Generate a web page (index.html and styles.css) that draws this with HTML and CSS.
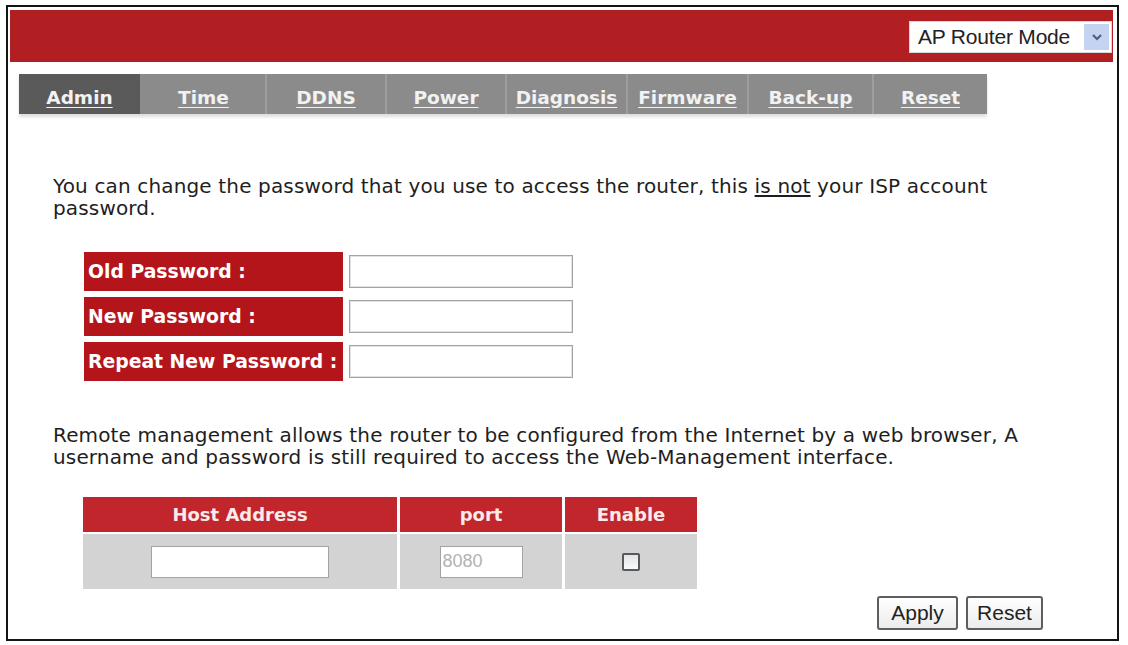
FILE: index.html
```html
<!DOCTYPE html>
<html lang="en">
<head>
  <meta charset="UTF-8">
  <meta name="viewport" content="width=device-width, initial-scale=1.0">
  <title>Admin</title>
  <link rel="stylesheet" href="styles.css">
</head>
<body>

<div class="frame">
  <div class="topbar">
    <div class="mode-select">
      <span class="mode-text">AP Router Mode</span>
      <span class="mode-arrow">
        <svg width="12" height="10" viewBox="0 0 12 10"><path d="M2 3 L6 7 L10 3" fill="none" stroke="#4a5f86" stroke-width="2.2"/></svg>
      </span>
    </div>
  </div>

  <nav class="tabs">
    <a class="tab active" href="#">Admin</a>
    <a class="tab" href="#">Time</a>
    <a class="tab" href="#">DDNS</a>
    <a class="tab" href="#">Power</a>
    <a class="tab" href="#">Diagnosis</a>
    <a class="tab" href="#">Firmware</a>
    <a class="tab" href="#">Back-up</a>
    <a class="tab" href="#">Reset</a>
  </nav>

  <div class="content">
    <p class="intro"><span>You can change the password that you use to access the router, this <u>is not</u> your ISP account</span> <span>password.</span></p>

    <div class="pw-form">
      <div class="pw-row">
        <label class="pw-label">Old Password :</label>
        <input class="pw-input" type="password">
      </div>
      <div class="pw-row">
        <label class="pw-label">New Password :</label>
        <input class="pw-input" type="password">
      </div>
      <div class="pw-row">
        <label class="pw-label">Repeat New Password :</label>
        <input class="pw-input" type="password">
      </div>
    </div>

    <p class="intro remote-text">Remote management allows the router to be configured from the Internet by a web browser, A username and password is still required to access the Web-Management interface.</p>

    <table class="remote">
      <tr>
        <th class="col-host">Host Address</th>
        <th class="col-port">port</th>
        <th class="col-enable">Enable</th>
      </tr>
      <tr>
        <td><input class="host-input" type="text"></td>
        <td><input class="port-input" type="text" placeholder="8080"></td>
        <td><input class="check" type="checkbox"></td>
      </tr>
    </table>

    <div class="actions">
      <button class="btn btn-apply">Apply</button>
      <button class="btn btn-reset">Reset</button>
    </div>
  </div>
</div>

</body>
</html>
```

FILE: styles.css
```css
body {
  margin: 0;
  padding: 5px 9px 0 6px;
  background-color: #ffffff;
  font-family: "DejaVu Sans", Verdana, sans-serif;
  color: #1e1e1e;
}
.frame {
  box-sizing: border-box;
  height: 636px;
  border: 2px solid #141414;
}
.topbar {
  display: flex;
  justify-content: flex-end;
  align-items: center;
  height: 52px;
  margin: 3px 4px 0 2px;
  background-color: #b11f23;
}
.mode-select {
  display: flex;
  align-items: center;
  justify-content: space-between;
  box-sizing: border-box;
  width: 203px;
  height: 32px;
  margin: 2px 1px 0 0;
  padding: 0 2px 0 8px;
  background-color: #ffffff;
  border: 1px solid #d8d8d8;
  font-family: "Liberation Sans", Arial, sans-serif;
  font-size: 21px;
  letter-spacing: -0.2px;
  color: #222222;
}
.mode-arrow {
  display: flex;
  align-items: center;
  justify-content: center;
  width: 25px;
  height: 26px;
  background-color: #c4d4f0;
}
.tabs {
  display: grid;
  grid-template-columns: 121px 125px 120px 120px 121px 121px 125px 115px;
  width: 968px;
  height: 40px;
  margin: 12px 0 0 11px;
  background-color: #8b8b8b;
  box-shadow: 0 3px 3px #dedede;
}
.tab {
  display: flex;
  align-items: center;
  justify-content: center;
  padding-top: 6px;
  box-sizing: border-box;
  font-weight: bold;
  font-size: 18.5px;
  color: #f2f2f2;
  text-decoration: underline;
  text-underline-offset: 3px;
  border-left: 2px solid #9d9d9d;
  background-clip: padding-box;
}
.tab:first-child {
  border-left: none;
}
.tab.active {
  background-color: #5a5a5a;
}
.tab.active + .tab {
  border-left-color: #8b8b8b;
}
.content {
  padding: 0 0 0 45px;
}
.intro {
  width: 1020px;
  margin: 61px 0 0 0;
  font-size: 20px;
  line-height: 22px;
  letter-spacing: 0.15px;
}
.intro span {
  display: inline-block;
}
.intro u {
  text-underline-offset: 2px;
}
.pw-form {
  display: flex;
  flex-direction: column;
  gap: 6px;
  margin: 33px 0 0 31px;
}
.pw-row {
  display: flex;
  align-items: center;
  gap: 6px;
  height: 39px;
}
.pw-label {
  display: flex;
  align-items: center;
  box-sizing: border-box;
  width: 259px;
  height: 100%;
  padding-left: 4px;
  background-color: #b3151b;
  color: #ffffff;
  font-weight: bold;
  font-size: 18.8px;
}
.pw-input {
  box-sizing: border-box;
  width: 224px;
  height: 33px;
  border: 1px solid #a3a3a3;
  box-shadow: inset 0 0 0 1px #e2e2e2;
}
.remote-text {
  margin-top: 43px;
}
.remote {
  border-collapse: separate;
  border-spacing: 3px 2px;
  margin: 27px 0 0 27px;
}
.remote th {
  height: 35px;
  padding: 0;
  background-color: #c0262c;
  color: #fbeaea;
  font-size: 18px;
  font-weight: bold;
}
.remote td {
  height: 55px;
  padding: 0;
  background-color: #d3d3d3;
  text-align: center;
}
.col-host {
  width: 314px;
}
.col-port {
  width: 162px;
}
.col-enable {
  width: 132px;
}
.host-input,
.port-input {
  box-sizing: border-box;
  height: 32px;
  border: 1px solid #a3a3a3;
  background-color: #ffffff;
  vertical-align: middle;
}
.host-input {
  width: 178px;
}
.port-input {
  width: 83px;
  padding-left: 2px;
  font-family: "Liberation Sans", Arial, sans-serif;
  font-size: 18px;
}
.port-input::placeholder {
  color: #b2b2b2;
}
.check {
  appearance: none;
  box-sizing: border-box;
  width: 18px;
  height: 18px;
  margin: 0;
  border: 2px solid #555a60;
  border-radius: 2px;
  background: linear-gradient(#e4e4e4, #fafafa);
  vertical-align: middle;
}
.actions {
  display: flex;
  justify-content: flex-end;
  gap: 8px;
  margin: 5px 74px 0 0;
}
.btn {
  height: 34px;
  padding: 0;
  border: 2px solid #5e5e5e;
  border-radius: 3px;
  background: linear-gradient(#ffffff, #ececec);
  font-family: "Liberation Sans", Arial, sans-serif;
  font-size: 21px;
  color: #222222;
}
.btn-apply {
  width: 81px;
}
.btn-reset {
  width: 77px;
}
```
